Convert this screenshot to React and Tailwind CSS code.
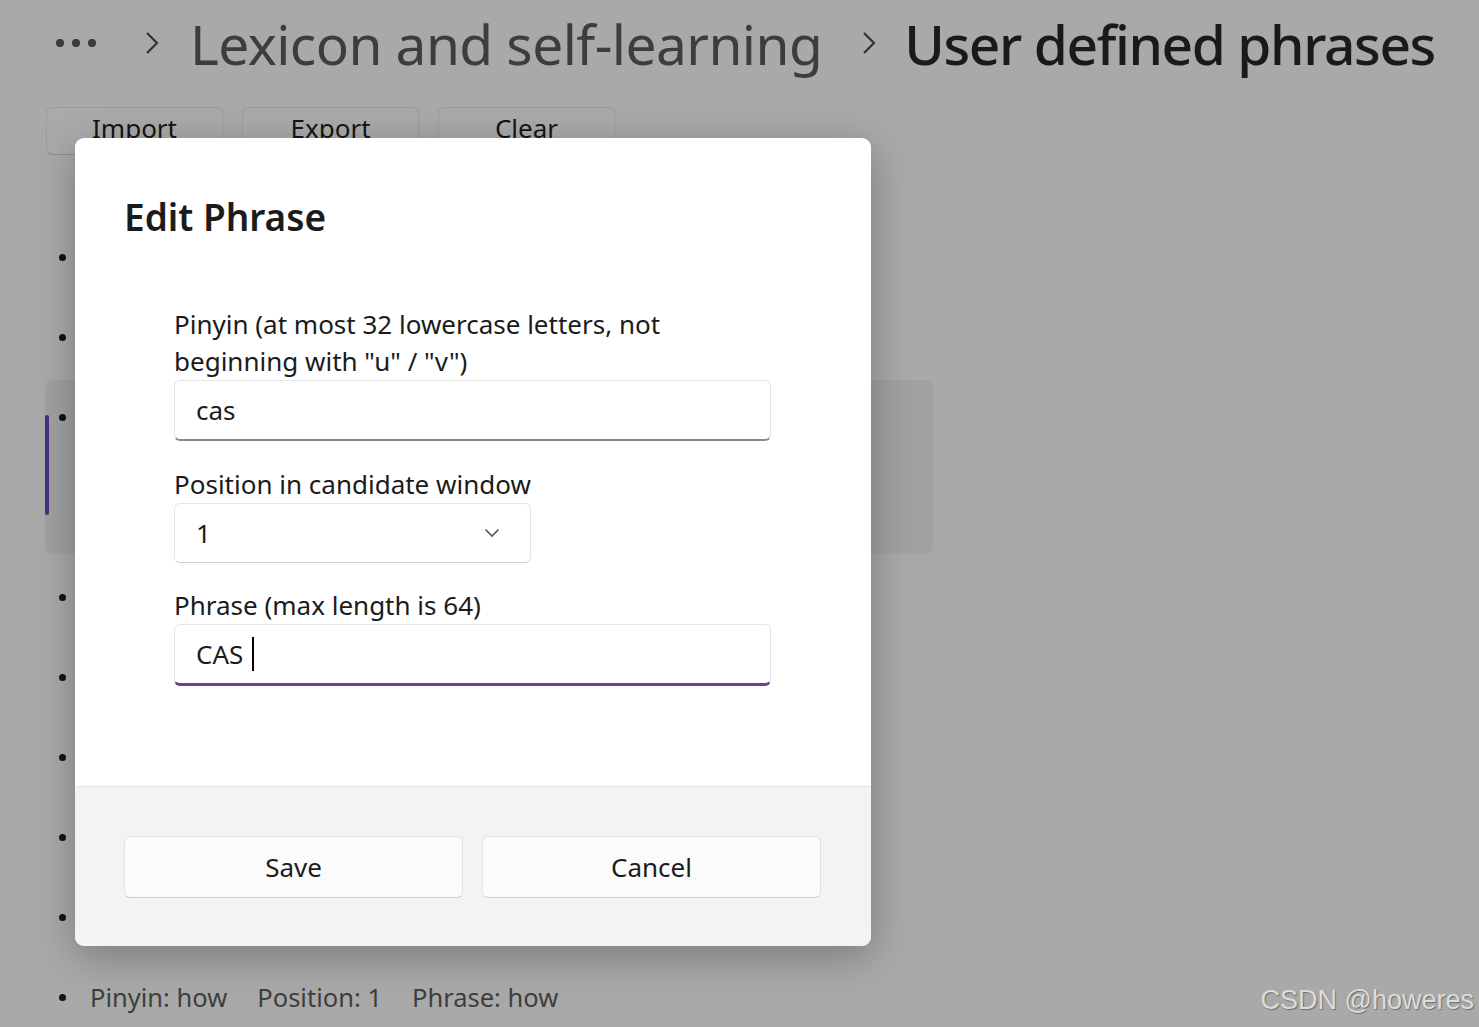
import React from "react";

const F = { fontFamily: '"Noto Sans", "Open Sans", sans-serif' };

function Row({ selected, text }) {
  return (
    <div className={selected ? "relative h-[180px] py-[3px]" : "relative h-[80px]"}>
      <div className={selected ? "relative h-full rounded-[8px] bg-[#a1a1a1]" : "h-full"}>
        {selected && <div className="absolute left-0 top-[35px] h-[100px] w-[4px] rounded-full bg-[#4b2f7e]" />}
        <div className={selected ? "flex h-[74px] items-center" : "flex h-full items-center"}>
          <div className="ml-[14px] h-[7px] w-[7px] rounded-full bg-[#111]" />
          {text && <div className="ml-[24px] flex gap-[30px] text-[25.5px] text-[#3e3e3e]">{text}</div>}
        </div>
      </div>
    </div>
  );
}

export default function App() {
  const rows = [0, 1, 2, 3, 4, 5, 6, 7, 8];
  return (
    <div className="relative h-[1027px] w-[1479px] overflow-hidden bg-[#a9a9a9]" style={F}>
      {/* header */}
      <div className="flex h-[86px] items-center pl-[56px]">
        <div className="flex gap-[8px]">
          <div className="h-[8px] w-[8px] rounded-full bg-[#3a3a3a]" />
          <div className="h-[8px] w-[8px] rounded-full bg-[#3a3a3a]" />
          <div className="h-[8px] w-[8px] rounded-full bg-[#3a3a3a]" />
        </div>
        <svg className="ml-[49px]" width="14" height="24" viewBox="0 0 14 24">
          <polyline points="2,2 12,12 2,22" fill="none" stroke="#333" strokeWidth="2.2" />
        </svg>
        <div className="ml-[31px] text-[55px] leading-none tracking-[-0.01em] text-[#3d3d3d]">Lexicon and self-learning</div>
        <svg className="ml-[40px]" width="14" height="24" viewBox="0 0 14 24">
          <polyline points="2,2 12,12 2,22" fill="none" stroke="#333" strokeWidth="2.2" />
        </svg>
        <div className="ml-[28px] text-[55px] font-medium leading-none tracking-[-0.025em] text-[#1a1a1a]">User defined phrases</div>
      </div>
      {/* action buttons */}
      <div className="ml-[46px] mt-[21px] flex gap-[19px]">
        {["Import", "Export", "Clear"].map((t) => (
          <div key={t} className="flex h-[48px] w-[177px] items-start justify-center rounded-[6px] border border-[#9c9c9c] border-b-[#8e8e8e] bg-[#aaaaaa] pt-[1px] text-[26px] text-[#151515]">
            {t}
          </div>
        ))}
      </div>
      {/* list */}
      <div className="ml-[45px] mt-[62px] w-[888px]">
        {rows.map((i) => (
          <Row
            key={i}
            selected={i === 2}
            text={
              i === 8 ? (
                <>
                  <span>Pinyin: how</span>
                  <span>Position: 1</span>
                  <span>Phrase: how</span>
                </>
              ) : null
            }
          />
        ))}
      </div>

      {/* watermark */}
      <div
        className="absolute right-[5px] top-[983px] text-[27px] leading-[34px] text-[#dcdcdc] [text-shadow:1px_1px_1px_rgba(0,0,0,0.35)]"
        style={{ fontFamily: '"Liberation Sans", Arial, sans-serif' }}
      >
        CSDN @howeres
      </div>

      {/* dialog */}
      <div className="absolute left-[75px] top-[138px] flex h-[808px] w-[796px] flex-col overflow-hidden rounded-[9px] bg-white shadow-[0_10px_40px_rgba(0,0,0,0.28)]">
        <div className="flex-1 pl-[49px] pt-[54px] text-[#1b1b1b]">
          <div className="text-[37px] font-semibold leading-[50px]">Edit Phrase</div>
          <div className="ml-[50px] mt-[64px] w-[597px]">
            <div className="w-[540px] text-[26px] leading-[37px]">
              Pinyin (at most 32 lowercase letters, not beginning with "u" / "v")
            </div>
            <div className="flex h-[61px] items-center rounded-[6px] border border-[#e6e6e6] border-b-[2px] border-b-[#8a8a8a] pl-[21px] text-[26px]">
              cas
            </div>
            <div className="mt-[25px] text-[26px] leading-[37px]">Position in candidate window</div>
            <div className="flex h-[60px] w-[357px] items-center justify-between rounded-[6px] border border-[#e6e6e6] border-b-[#d0d0d0] pl-[21px] pr-[30px] text-[26px]">
              <span>1</span>
              <svg width="16" height="10" viewBox="0 0 16 10">
                <polyline points="1.5,1.5 8,8 14.5,1.5" fill="none" stroke="#555" strokeWidth="1.6" />
              </svg>
            </div>
            <div className="mt-[24px] text-[26px] leading-[37px]">Phrase (max length is 64)</div>
            <div className="flex h-[62px] items-center rounded-[6px] border border-[#e6e6e6] border-b-[3px] border-b-[#66449a] pl-[21px] text-[26px]">
              <span>CAS</span>
              <span className="ml-[9px] inline-block h-[34px] w-[2px] bg-black" />
            </div>
          </div>
        </div>
        <div className="flex h-[160px] gap-[19px] border-t border-[#e5e5e5] bg-[#f3f3f3] pl-[49px] pr-[49px] pt-[49px]">
          {["Save", "Cancel"].map((t) => (
            <div key={t} className="flex h-[62px] w-[339px] items-center justify-center rounded-[6px] border border-[#e3e3e3] border-b-[#cdcdcd] bg-[#fbfbfb] text-[26px] text-[#1b1b1b]">
              {t}
            </div>
          ))}
        </div>
      </div>
    </div>
  );
}
